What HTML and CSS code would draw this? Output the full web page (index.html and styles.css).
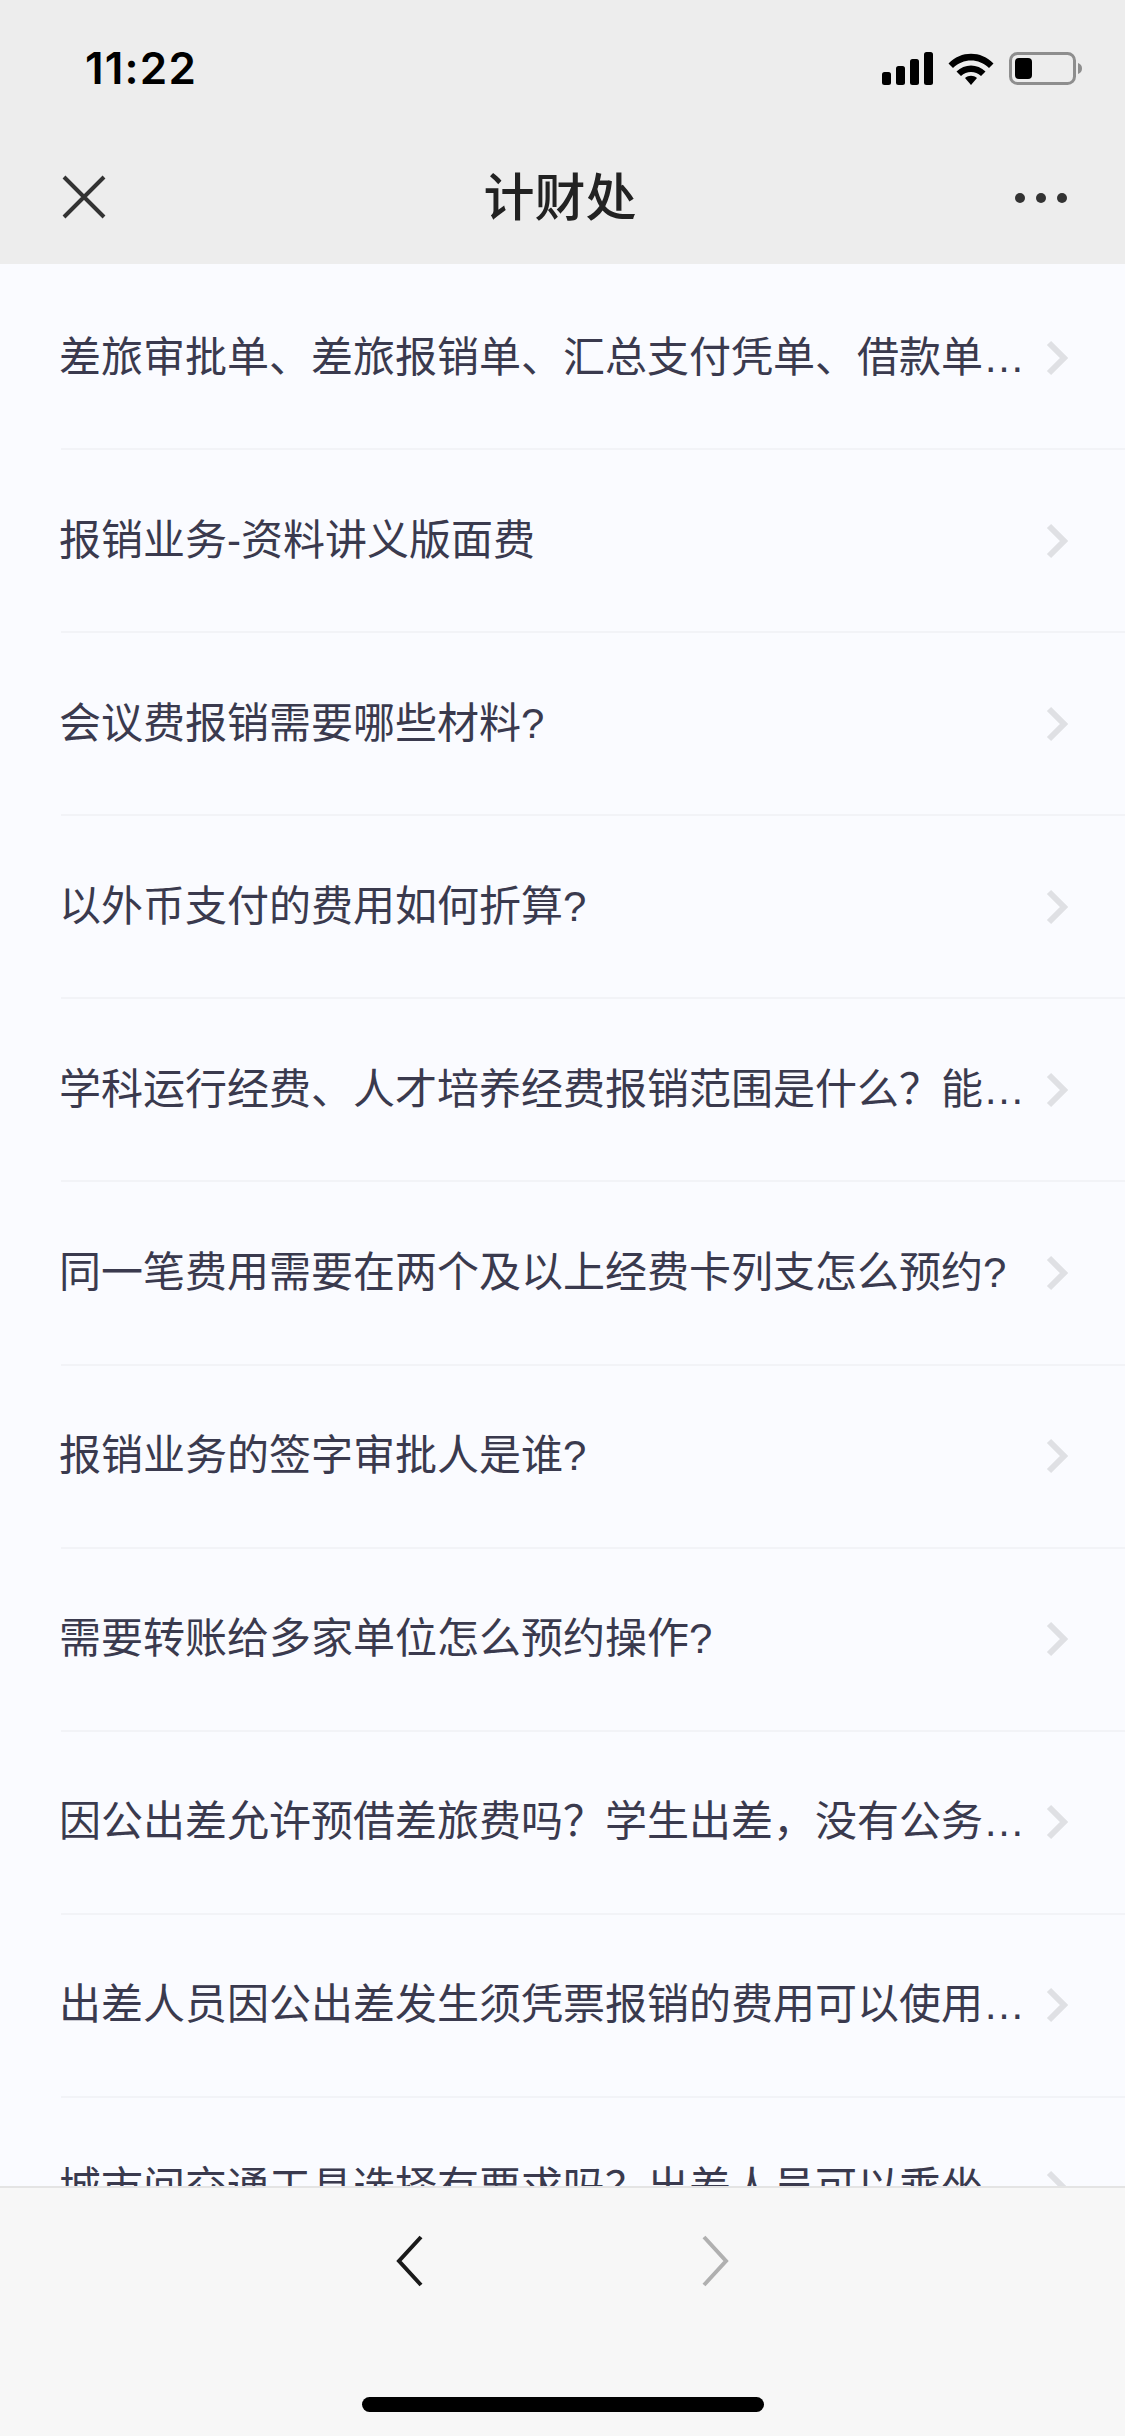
FILE: index.html
```html
<!DOCTYPE html>
<html lang="zh-CN">
<head>
<meta charset="utf-8">
<title>计财处</title>
<link rel="stylesheet" href="styles.css">
</head>
<body>
<div class="page">
  <header class="header">
    <div class="status">
      <span class="time">11:22</span>
      <div class="status-icons">
        <svg width="51" height="33" viewBox="0 0 51 33"><rect x="0" y="20" width="9" height="13" rx="2.5"/><rect x="14" y="14" width="9" height="19" rx="2.5"/><rect x="28" y="7" width="9" height="26" rx="2.5"/><rect x="42" y="0" width="9" height="33" rx="2.5"/></svg>
        <svg width="46" height="33" viewBox="0 0 46 33"><path d="M0.5 11.5 C13 -1.5 33 -1.5 45.500 11.500 L41 16 C31 6 15 6 5 16 Z"/><path d="M8.500 19.500 C16.500 11.500 29.500 11.500 37.500 19.500 L33 24 C27.500 18.500 18.500 18.500 13 24 Z"/><path d="M17 26 C20.500 23 25.500 23 29 26 L23 33 Z"/></svg>
        <svg width="73" height="33" viewBox="0 0 73 33"><rect x="1.500" y="1.500" width="64" height="30" rx="7" fill="none" stroke="#8e8e8e" stroke-width="3"/><rect x="6" y="6" width="17" height="21" rx="4" fill="#000"/><path d="M69 11 C72 12 73 14 73 16.500 C73 19 72 21 69 22 Z" fill="#8e8e8e"/></svg>
      </div>
    </div>
    <div class="nav">
      <svg class="close" width="44" height="44" viewBox="0 0 44 44"><path d="M2 2 L42 42 M42 2 L2 42" fill="none" stroke="#333" stroke-width="4"/></svg>
      <h1 class="title">计财处</h1>
      <div class="more"><i></i><i></i><i></i></div>
    </div>
  </header>
  <main class="list">
    <div class="row"><span class="label">差旅审批单、差旅报销单、汇总支付凭单、借款单…</span><svg class="chev" viewBox="0 0 22 36"><path d="M3 3 L18 18 L3 33" /></svg></div>
    <div class="row"><span class="label">报销业务-资料讲义版面费</span><svg class="chev" viewBox="0 0 22 36"><path d="M3 3 L18 18 L3 33" /></svg></div>
    <div class="row"><span class="label">会议费报销需要哪些材料?</span><svg class="chev" viewBox="0 0 22 36"><path d="M3 3 L18 18 L3 33" /></svg></div>
    <div class="row"><span class="label">以外币支付的费用如何折算?</span><svg class="chev" viewBox="0 0 22 36"><path d="M3 3 L18 18 L3 33" /></svg></div>
    <div class="row"><span class="label">学科运行经费、人才培养经费报销范围是什么？能…</span><svg class="chev" viewBox="0 0 22 36"><path d="M3 3 L18 18 L3 33" /></svg></div>
    <div class="row"><span class="label">同一笔费用需要在两个及以上经费卡列支怎么预约?</span><svg class="chev" viewBox="0 0 22 36"><path d="M3 3 L18 18 L3 33" /></svg></div>
    <div class="row"><span class="label">报销业务的签字审批人是谁?</span><svg class="chev" viewBox="0 0 22 36"><path d="M3 3 L18 18 L3 33" /></svg></div>
    <div class="row"><span class="label">需要转账给多家单位怎么预约操作?</span><svg class="chev" viewBox="0 0 22 36"><path d="M3 3 L18 18 L3 33" /></svg></div>
    <div class="row"><span class="label">因公出差允许预借差旅费吗？学生出差，没有公务…</span><svg class="chev" viewBox="0 0 22 36"><path d="M3 3 L18 18 L3 33" /></svg></div>
    <div class="row"><span class="label">出差人员因公出差发生须凭票报销的费用可以使用…</span><svg class="chev" viewBox="0 0 22 36"><path d="M3 3 L18 18 L3 33" /></svg></div>
    <div class="row"><span class="label">城市间交通工具选择有要求吗？出差人员可以乘坐…</span><svg class="chev" viewBox="0 0 22 36"><path d="M3 3 L18 18 L3 33" /></svg></div>
  </main>
  <footer class="footer">
    <div class="toolbar">
      <svg class="arrow" width="28" height="52" viewBox="0 0 28 52"><path d="M25 2 L3 26 L25 50" fill="none" stroke="#1a1a1a" stroke-width="4"/></svg>
      <svg class="arrow" width="28" height="52" viewBox="0 0 28 52"><path d="M3 2 L25 26 L3 50" fill="none" stroke="#b0b0b0" stroke-width="4"/></svg>
    </div>
    <div class="home-bar"></div>
  </footer>
</div>
</body>
</html>
```
FILE: styles.css
```css
* { box-sizing: border-box; }
html, body { margin: 0; padding: 0; }
body { font-family: "Liberation Sans", "Noto Sans CJK SC", sans-serif; background: #fafbff; }
.page { width: 1125px; height: 2436px; display: flex; flex-direction: column; overflow: hidden; }
.header { height: 264px; flex: none; background: #ededed; }
.status { height: 132px; display: flex; justify-content: space-between; align-items: flex-start; padding: 48px 43px 0 85px; }
.time { font-family: Inter, "Liberation Sans", sans-serif; font-size: 44px; line-height: 40px; font-weight: 600; color: #000; letter-spacing: 1.2px; }
.status-icons { display: flex; align-items: center; gap: 15px; margin-top: 4px; }
.status-icons svg { display: block; fill: #000; }
.nav { height: 132px; display: flex; align-items: flex-start; justify-content: space-between; padding: 0 58px 0 62px; position: relative; }
.close { margin-top: 43px; display: block; }
.title { position: absolute; left: 0; right: 5px; top: 26px; margin: 0; text-align: center; font-family: "Noto Sans CJK SC", sans-serif; font-size: 51px; line-height: 72px; font-weight: 500; color: #222; }
.more { display: flex; gap: 11px; margin-top: 61px; }
.more i { display: block; width: 10px; height: 10px; border-radius: 50%; background: #333; }
.list { flex: 1; min-height: 0; overflow: hidden; background: #fafbff; padding: 3px 0 0 61px; }
.row { height: 183.1px; display: flex; align-items: center; padding-right: 57px; border-bottom: 2px solid #f2f3f7; }
.label { flex: 1; min-width: 0; margin-left: -2px; font-size: 42px; line-height: 60px; color: #3a3a4e; white-space: nowrap; }
.chev { flex: none; width: 22px; height: 36px; }
.chev path { fill: none; stroke: #dfe0e4; stroke-width: 6; }
.footer { height: 250px; flex: none; background: #f7f7f7; border-top: 2px solid #e4e4e4; position: relative; }
.toolbar { display: flex; justify-content: center; gap: 277px; padding-top: 47px; }
.arrow { display: block; }
.home-bar { position: absolute; left: 362px; bottom: 24px; width: 402px; height: 15px; border-radius: 8px; background: #000; }
```
